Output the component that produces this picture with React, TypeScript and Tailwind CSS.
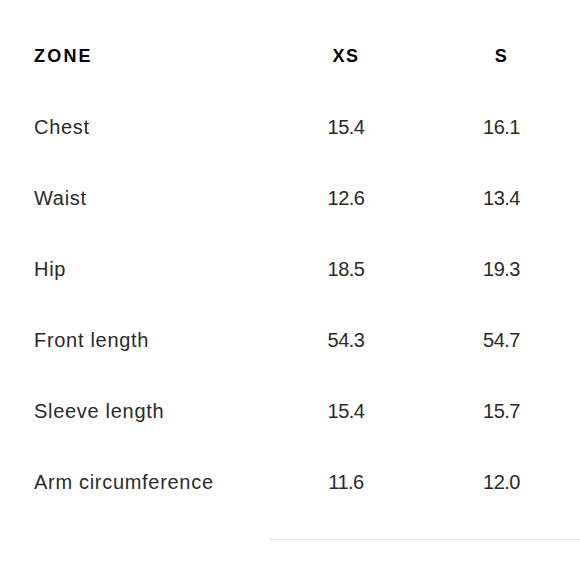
import React from "react";

const rows: [string, string, string][] = [
  ["Chest", "15.4", "16.1"],
  ["Waist", "12.6", "13.4"],
  ["Hip", "18.5", "19.3"],
  ["Front length", "54.3", "54.7"],
  ["Sleeve length", "15.4", "15.7"],
  ["Arm circumference", "11.6", "12.0"],
];

export default function App() {
  return (
    <div
      className="w-[580px] h-[580px] bg-white overflow-hidden pt-[21px] pl-[34px] text-[#2a2a2a]"
      style={{ fontFamily: '"Liberation Sans", Arial, sans-serif' }}
    >
      <div className="grid grid-cols-[235px_154px_157px]">
        <div className="h-[70px] flex items-center text-[18px] font-bold tracking-[2.2px] text-black">ZONE</div>
        <div className="h-[70px] flex items-center justify-center text-[18px] font-bold tracking-[1.6px] text-black">XS</div>
        <div className="h-[70px] flex items-center justify-center text-[18px] font-bold tracking-[1.6px] text-black">S</div>
        {rows.map(([z, xs, s]) => (
          <React.Fragment key={z}>
            <div className="h-[71px] flex items-center text-[20px] tracking-[0.7px]">{z}</div>
            <div className="h-[71px] flex items-center justify-center text-[20px] tracking-[-0.5px]">{xs}</div>
            <div className="h-[71px] flex items-center justify-center text-[20px] tracking-[-0.5px]">{s}</div>
          </React.Fragment>
        ))}
        <div className="h-[23px]" />
        <div className="h-[23px] col-span-2 border-b border-[#e3e3e3]" />
      </div>
    </div>
  );
}
